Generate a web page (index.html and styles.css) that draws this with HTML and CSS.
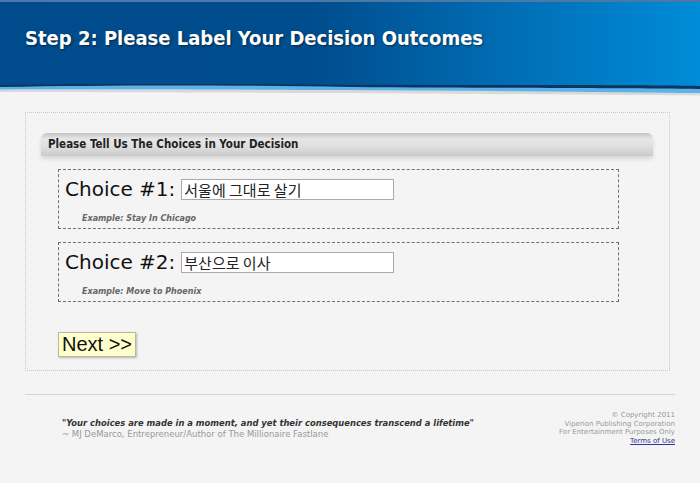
FILE: index.html
```html
<!DOCTYPE html>
<html>
<head>
<meta charset="utf-8">
<link rel="stylesheet" href="styles.css">
</head>
<body>
<header class="header">
  <h1 class="title">Step 2: Please Label Your Decision Outcomes</h1>
  <svg class="wave" viewBox="0 0 700 14" preserveAspectRatio="none" width="700" height="14">
    <path d="M0 3 C 150 1, 300 3, 450 3 C 550 3, 650 3, 700 4 L700 14 L0 14 Z" fill="#0d3560"/>
    <path d="M0 5 C 120 3, 220 3, 350 5 C 500 6, 620 6, 700 7 L700 14 L0 14 Z" fill="#5cb3ea"/>
    <path d="M0 7.5 C 150 7, 300 8, 350 8 C 500 9, 620 10, 700 11 L700 14 L0 14 Z" fill="#d9d9d9"/>
    <path d="M0 10 C 150 10, 300 11, 350 11 C 500 12, 620 13, 700 13.5 L700 14 L0 14 Z" fill="#f4f4f4"/>
  </svg>
</header>
<main class="panel">
  <div class="bar">Please Tell Us The Choices in Your Decision</div>
  <div class="choices">
    <div class="choice">
      <div class="row">
        <span class="label">Choice #1:</span>
        <span class="input">서울에 그대로 살기</span>
      </div>
      <div class="example">Example: Stay In Chicago</div>
    </div>
    <div class="choice">
      <div class="row">
        <span class="label">Choice #2:</span>
        <span class="input">부산으로 이사</span>
      </div>
      <div class="example">Example: Move to Phoenix</div>
    </div>
  </div>
  <button class="next">Next &gt;&gt;</button>
</main>
<footer class="footer">
  <div class="quote">
    <div class="q">"Your choices are made in a moment, and yet their consequences transcend a lifetime"</div>
    <div class="author">~ MJ DeMarco, Entrepreneur/Author of The Millionaire Fastlane</div>
  </div>
  <div class="legal">
    <div>© Copyright 2011</div>
    <div>Viperion Publishing Corporation</div>
    <div>For Entertainment Purposes Only</div>
    <div><a href="#" class="terms">Terms of Use</a></div>
  </div>
</footer>
</body>
</html>
```
FILE: styles.css
```css
* { box-sizing: border-box; }
html, body { margin: 0; padding: 0; }
body {
  background: #f4f4f4;
  font-family: "DejaVu Sans", Verdana, sans-serif;
  width: 700px;
  height: 483px;
  overflow: hidden;
}
.header {
  height: 96px;
  border-top: 2px solid #4b79a6;
  background: linear-gradient(90deg, #004b8b 0%, #004d8d 45%, #0070b8 75%, #008cd8 100%);
  display: flex;
  flex-direction: column;
  justify-content: space-between;
}
.title {
  margin: 24px 0 0 25px;
  font-family: "DejaVu Sans Condensed", "DejaVu Sans", sans-serif;
  font-weight: bold;
  font-size: 20px;
  line-height: 24px;
  color: #fff;
  text-shadow: 1px 1px 2px rgba(0,0,0,0.5);
}
.wave { display: block; }
.panel {
  margin: 16px 0 0 25px;
  width: 645px;
  border: 1px dotted #c8c8c8;
  padding: 20px 16px 13px 15px;
}
.bar {
  height: 23px;
  border-radius: 6px 6px 0 0;
  background: linear-gradient(#c4c4c4 0%, #e6e6e6 25%, #e0e0e0 55%, #cbcbcb 100%);
  box-shadow: 0 3px 4px rgba(0,0,0,0.12);
  font-family: "DejaVu Sans Condensed", "DejaVu Sans", sans-serif;
  font-weight: bold;
  font-size: 11.5px;
  line-height: 23px;
  color: #222;
  padding-left: 7px;
}
.choices {
  margin: 13px 0 0 17px;
  width: 561px;
  display: flex;
  flex-direction: column;
  gap: 13px;
}
.choice {
  height: 60px;
  border: 1px dashed #707070;
  padding: 7px 0 0 6px;
}
.row { display: flex; align-items: center; height: 24px; }
.label {
  font-size: 20px;
  color: #111;
  margin-right: 6px;
}
.input {
  width: 213px;
  height: 21px;
  background: #fff;
  border: 1px solid #aaa;
  font-family: "Noto Sans CJK KR", sans-serif;
  font-size: 15px;
  line-height: 19px;
  padding-left: 2px;
  color: #222;
}
.example {
  margin: 13px 0 0 17px;
  font-size: 8px;
  font-weight: bold;
  font-style: italic;
  color: #666;
}
.next {
  display: block;
  margin: 30px 0 0 17px;
  width: 78px;
  height: 25px;
  padding: 0;
  background: #ffffcc;
  border: 1px solid #b8b8a0;
  box-shadow: 1px 1px 2px rgba(0,0,0,0.25);
  font-family: "Liberation Sans", Arial, sans-serif;
  font-size: 20px;
  color: #111;
  text-align: center;
}
.footer {
  margin: 23px 0 0 25px;
  width: 650px;
  border-top: 1px solid #d4d4d4;
  display: flex;
  justify-content: space-between;
  padding: 16px 0 0 37px;
}
.quote { padding-top: 7px; }
.q {
  font-size: 8.4px;
  font-weight: bold;
  font-style: italic;
  color: #333;
  line-height: 11px;
}
.author {
  font-size: 8.5px;
  color: #999;
  line-height: 11px;
}
.legal {
  text-align: right;
  font-size: 7px;
  line-height: 8.7px;
  color: #999;
}
.terms { color: #333399; text-decoration: underline; }
```
